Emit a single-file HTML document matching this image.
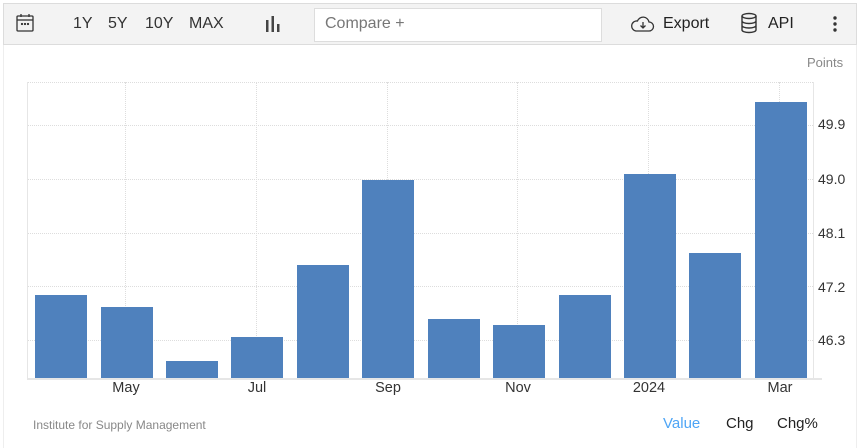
<!DOCTYPE html>
<html><head><style>
body{margin:0;width:859px;height:448px;background:#fff;font-family:"Liberation Sans",Arial,sans-serif;position:relative;overflow:hidden}
.a{position:absolute}
.tb{left:3px;top:3px;width:852px;height:40px;background:#f3f3f3;border:1px solid #dcdcdc}
.t{font-size:16px;color:#333}
.bar{position:absolute;background:#4f81bd;width:52px;bottom:70px}
.vg{position:absolute;top:82px;height:296px;border-left:1px dotted #ddd}
.hg{position:absolute;left:28px;width:785px;border-top:1px dotted #ddd}
.yl{position:absolute;left:818px;font-size:14px;color:#333}
.xl{position:absolute;top:380px;font-size:14.5px;color:#333;transform:translateX(-50%)}
</style></head><body>
<div class="a" style="left:3px;top:44px;width:852px;height:404px;border-left:1px solid #eee;border-right:1px solid #eee"></div>
<div class="a tb"></div>
<svg class="a" style="left:15px;top:13px" width="20" height="20" viewBox="0 0 20 20" fill="none" stroke="#333" stroke-width="1.3"><rect x="2" y="3" width="16" height="15" rx="1"/><line x1="2" y1="7" x2="18" y2="7"/><line x1="6" y1="1" x2="6" y2="4"/><line x1="14" y1="1" x2="14" y2="4"/><circle cx="7" cy="11" r=".5" fill="#333"/><circle cx="10" cy="11" r=".5" fill="#333"/><circle cx="13" cy="11" r=".5" fill="#333"/></svg>
<div class="a t" style="left:73px;top:15px">1Y</div>
<div class="a t" style="left:108px;top:15px">5Y</div>
<div class="a t" style="left:145px;top:15px">10Y</div>
<div class="a t" style="left:189px;top:15px">MAX</div>
<svg class="a" style="left:265px;top:15px" width="16" height="17"><rect x="1" y="5" width="2.5" height="12" fill="#444"/><rect x="6.5" y="1" width="2.5" height="16" fill="#444"/><rect x="12" y="9" width="2.5" height="8" fill="#444"/></svg>
<div class="a" style="left:314px;top:8px;width:286px;height:32px;background:#fff;border:1px solid #ddd"></div>
<div class="a" style="left:325px;top:15px;font-size:16px;color:#777">Compare +</div>
<svg class="a" style="left:629px;top:14px" width="26" height="20" viewBox="0 0 26 20" fill="none" stroke="#333" stroke-width="1.3"><path d="M7 17h13a4.5 4.5 0 0 0 0-9 6 6 0 0 0-11.5-1A5 5 0 0 0 7 17z"/><path d="M14 8v6M11.5 11.5l2.5 2.5 2.5-2.5"/></svg>
<div class="a t" style="left:663px;top:15px;color:#222">Export</div>
<svg class="a" style="left:740px;top:12px" width="18" height="22" viewBox="0 0 18 22" fill="none" stroke="#333" stroke-width="1.4"><ellipse cx="9" cy="4" rx="7" ry="2.5"/><path d="M2 4v14c0 1.4 3 2.5 7 2.5s7-1.1 7-2.5V4M2 9c0 1.4 3 2.5 7 2.5s7-1.1 7-2.5M2 13.5c0 1.4 3 2.5 7 2.5s7-1.1 7-2.5"/></svg>
<div class="a t" style="left:768px;top:15px;color:#222">API</div>
<svg class="a" style="left:832px;top:16px" width="6" height="16"><circle cx="3" cy="2" r="1.7" fill="#333"/><circle cx="3" cy="8" r="1.7" fill="#333"/><circle cx="3" cy="14" r="1.7" fill="#333"/></svg>
<div class="a" style="left:807px;top:55px;font-size:13px;color:#888">Points</div>
<div class="hg" style="top:82px"></div>
<div class="hg" style="top:125px"></div>
<div class="hg" style="top:179px"></div>
<div class="hg" style="top:233px"></div>
<div class="hg" style="top:286px"></div>
<div class="hg" style="top:340px"></div>
<div class="vg" style="left:125px"></div><div class="vg" style="left:256px"></div><div class="vg" style="left:387px"></div><div class="vg" style="left:517px"></div><div class="vg" style="left:648px"></div><div class="vg" style="left:779px"></div>
<div class="a" style="left:27px;top:82px;height:296px;border-left:1px solid #e6e6e6"></div>
<div class="a" style="left:813px;top:82px;height:296px;border-left:1px solid #e6e6e6"></div>
<div class="a" style="left:27px;top:378px;width:795px;border-top:2px solid #e6e6e6"></div>
<div class="bar" style="left:35px;top:295px"></div>
<div class="bar" style="left:101px;top:307px"></div>
<div class="bar" style="left:166px;top:361px"></div>
<div class="bar" style="left:231px;top:337px"></div>
<div class="bar" style="left:297px;top:265px"></div>
<div class="bar" style="left:362px;top:180px"></div>
<div class="bar" style="left:428px;top:319px"></div>
<div class="bar" style="left:493px;top:325px"></div>
<div class="bar" style="left:559px;top:295px"></div>
<div class="bar" style="left:624px;top:174px"></div>
<div class="bar" style="left:689px;top:253px"></div>
<div class="bar" style="left:755px;top:102px"></div>
<div class="yl" style="top:116px">49.9</div>
<div class="yl" style="top:171px">49.0</div>
<div class="yl" style="top:225px">48.1</div>
<div class="yl" style="top:279px">47.2</div>
<div class="yl" style="top:332px">46.3</div>
<div class="xl" style="left:126px">May</div>
<div class="xl" style="left:257px">Jul</div>
<div class="xl" style="left:388px">Sep</div>
<div class="xl" style="left:518px">Nov</div>
<div class="xl" style="left:649px">2024</div>
<div class="xl" style="left:780px">Mar</div>
<div class="a" style="left:33px;top:418px;font-size:12px;color:#888">Institute for Supply Management</div>
<div class="a" style="left:663px;top:415px;font-size:15px;color:#4ea5f5">Value</div>
<div class="a" style="left:726px;top:415px;font-size:15px;color:#222">Chg</div>
<div class="a" style="left:777px;top:415px;font-size:15px;color:#222">Chg%</div>
</body></html>
